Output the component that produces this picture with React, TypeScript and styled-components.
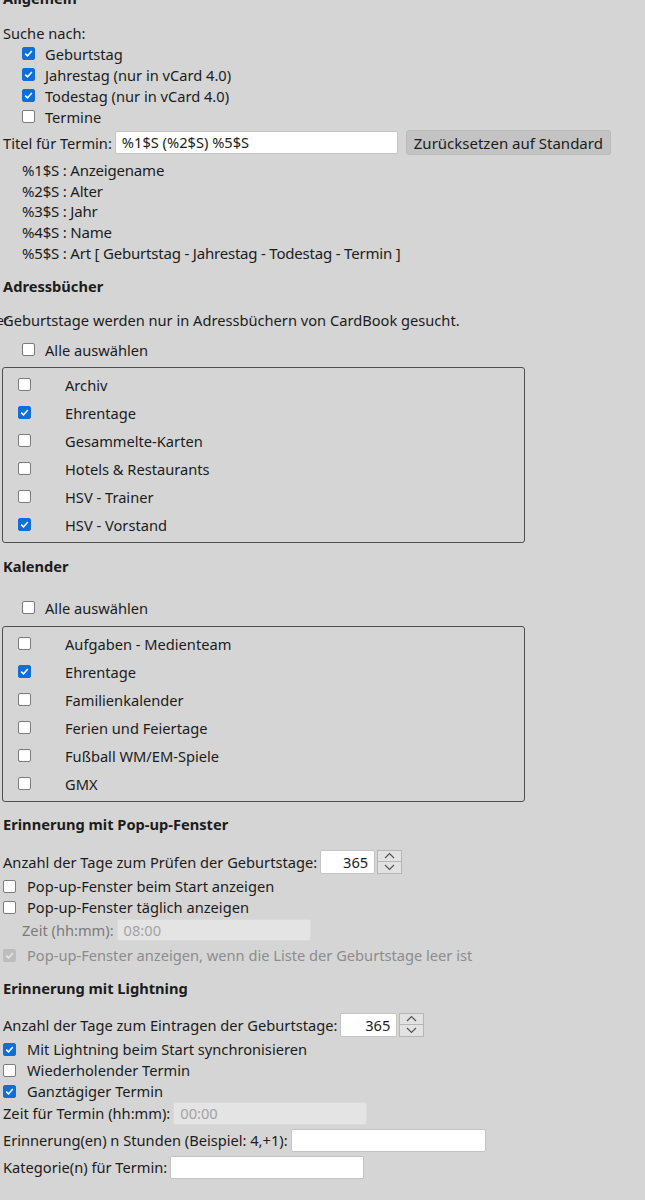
import React from 'react';
import styled, {createGlobalStyle} from 'styled-components';

const GlobalStyle = createGlobalStyle`
	body {
		margin: 0;
		background: #d5d5d5;
		font-family: "Noto Sans", "Open Sans", sans-serif;
		font-size: 14.65px;
		color: #1c1c1c;
	}
`;

const Page = styled.div`
	padding-left: 3px;
	margin-top: -12px;
	overflow: hidden;
`;

const Heading = styled.div<{ gap?: number }>`
	font-weight: bold;
	line-height: 20px;
	margin-top: ${p => p.gap ?? 0}px;
`;

const Line = styled.div<{ gap?: number }>`
	line-height: 20px;
	margin-top: ${p => p.gap ?? 0}px;
	position: relative;
`;

// half-hidden label peeking out under the description line
const Stray = styled.span`
	position: absolute;
	left: -6px;
	top: 5px;
	font-size: 12px;
	line-height: 12px;
`;

const CheckRow = styled.label<{ indent: number; labelAt: number; height?: number; disabled?: boolean; gap?: number }>`
	display: flex;
	align-items: center;
	height: ${p => p.height ?? 21}px;
	margin-top: ${p => p.gap ?? 0}px;
	padding-left: ${p => p.indent}px;
	white-space: nowrap;
	color: ${p => p.disabled ? '#8c8c8c' : 'inherit'};
	> span {
		margin-left: ${p => p.labelAt - p.indent - 13}px;
	}
`;

const Box = styled.div<{ checked?: boolean; disabled?: boolean }>`
	width: 13px;
	height: 13px;
	box-sizing: border-box;
	border-radius: 2px;
	flex-shrink: 0;
	display: flex;
	align-items: center;
	justify-content: center;
	background: ${p => p.disabled ? '#bdbdbd' : p.checked ? '#0f6fd4' : '#ffffff'};
	border: 1px solid ${p => p.disabled ? '#bdbdbd' : p.checked ? '#0f6fd4' : '#7c7c7c'};
`;

const Checkbox = ({checked, disabled}: { checked?: boolean; disabled?: boolean }) => (
	<Box checked={checked} disabled={disabled}>
		{checked && (
			<svg width="9" height="9" viewBox="0 0 9 9">
				<path d="M1.2 4.6 L3.5 6.9 L7.8 1.9" fill="none" stroke={disabled ? '#e6e6e6' : '#fff'} strokeWidth="1.6"/>
			</svg>
		)}
	</Box>
);

const Row = styled.div<{ gap?: number }>`
	display: flex;
	align-items: center;
	margin-top: ${p => p.gap ?? 0}px;
	white-space: nowrap;
`;

const Field = styled.div<{ width: number; height?: number; disabled?: boolean; right?: boolean }>`
	box-sizing: border-box;
	width: ${p => p.width}px;
	height: ${p => p.height ?? 23}px;
	line-height: ${p => (p.height ?? 23) - 2}px;
	padding: 0 6px;
	background: ${p => p.disabled ? '#e4e4e4' : '#ffffff'};
	border: 1px solid ${p => p.disabled ? '#dadada' : '#c4c4c4'};
	border-radius: 2px;
	color: ${p => p.disabled ? '#a3a3a3' : 'inherit'};
	text-align: ${p => p.right ? 'right' : 'left'};
`;

const ResetButton = styled.div`
	margin-left: 8px;
	height: 25px;
	line-height: 24px;
	background: #c3c3c3;
	border: 1px solid #bbbbbb;
	border-radius: 3px;
	box-sizing: border-box;
	width: 205px;
	text-align: center;
	font-size: 15px;
`;

const Legend = styled.div`
	padding-left: 19px;
	margin-top: 5px;
	font-size: 15px;
	letter-spacing: -0.2px;
	> div {
		line-height: 20.7px;
		white-space: nowrap;
	}
`;

const ListBox = styled.div<{ gap: number }>`
	width: 523px;
	margin-top: ${p => p.gap}px;
	margin-left: -1px;
	box-sizing: border-box;
	padding: 3px 0;
	border: 1px solid #4f4f4f;
	border-radius: 3px;
`;

const Spin = styled.div`
	margin-left: 2px;
	width: 25px;
	height: 24px;
	box-sizing: border-box;
	border: 1px solid #b6b6b6;
	background: #e2e2e2;
	display: flex;
	flex-direction: column;
	> div {
		flex: 1;
		display: flex;
		align-items: center;
		justify-content: center;
	}
	> div + div {
		border-top: 1px solid #b6b6b6;
	}
`;

const Spinner = () => (
	<Spin>
		<div>
			<svg width="11" height="7" viewBox="0 0 11 7">
				<path d="M1 6 L5.5 1.5 L10 6" fill="none" stroke="#555" strokeWidth="1.2"/>
			</svg>
		</div>
		<div>
			<svg width="11" height="7" viewBox="0 0 11 7">
				<path d="M1 1 L5.5 5.5 L10 1" fill="none" stroke="#555" strokeWidth="1.2"/>
			</svg>
		</div>
	</Spin>
);

const Label = styled.span<{ disabled?: boolean }>`
	margin-right: 3px;
	color: ${p => p.disabled ? '#7a7a7a' : 'inherit'};
`;

const books: [string, boolean][] = [
	['Archiv', false],
	['Ehrentage', true],
	['Gesammelte-Karten', false],
	['Hotels & Restaurants', false],
	['HSV - Trainer', false],
	['HSV - Vorstand', true],
];

const calendars: [string, boolean][] = [
	['Aufgaben - Medienteam', false],
	['Ehrentage', true],
	['Familienkalender', false],
	['Ferien und Feiertage', false],
	['Fußball WM/EM-Spiele', false],
	['GMX', false],
];

const legend = [
	'%1$S : Anzeigename',
	'%2$S : Alter',
	'%3$S : Jahr',
	'%4$S : Name',
	'%5$S : Art [ Geburtstag - Jahrestag - Todestag - Termin ]',
];

const App = () => {
	return (
		<>
			<GlobalStyle/>
			<Page>
				<Heading>Allgemein</Heading>
				<Line gap={15}>Suche nach:</Line>
				<CheckRow indent={19} labelAt={42}><Checkbox checked/><span>Geburtstag</span></CheckRow>
				<CheckRow indent={19} labelAt={42}><Checkbox checked/><span>Jahrestag (nur in vCard 4.0)</span></CheckRow>
				<CheckRow indent={19} labelAt={42}><Checkbox checked/><span>Todestag (nur in vCard 4.0)</span></CheckRow>
				<CheckRow indent={19} labelAt={42}><Checkbox/><span>Termine</span></CheckRow>
				<Row gap={3}>
					<Label>Titel für Termin:</Label>
					<Field width={283}>%1$S (%2$S) %5$S</Field>
					<ResetButton>Zurücksetzen auf Standard</ResetButton>
				</Row>
				<Legend>
					{legend.map(l => <div key={l}>{l}</div>)}
				</Legend>

				<Heading gap={12}>Adressbücher</Heading>
				<Line gap={14}><Stray>er</Stray>Geburtstage werden nur in Adressbüchern von CardBook gesucht.</Line>
				<CheckRow indent={19} labelAt={42} height={20} gap={10}><Checkbox/><span>Alle auswählen</span></CheckRow>
				<ListBox gap={7}>
					{books.map(([name, on]) => (
						<CheckRow key={name} indent={15} labelAt={62} height={28}><Checkbox checked={on}/><span>{name}</span></CheckRow>
					))}
				</ListBox>

				<Heading gap={13}>Kalender</Heading>
				<CheckRow indent={19} labelAt={42} height={20} gap={22}><Checkbox/><span>Alle auswählen</span></CheckRow>
				<ListBox gap={8}>
					{calendars.map(([name, on]) => (
						<CheckRow key={name} indent={15} labelAt={62} height={28}><Checkbox checked={on}/><span>{name}</span></CheckRow>
					))}
				</ListBox>

				<Heading gap={12}>Erinnerung mit Pop-up-Fenster</Heading>
				<Row gap={16}>
					<Label>Anzahl der Tage zum Prüfen der Geburtstage:</Label>
					<Field width={55} height={24} right>365</Field>
					<Spinner/>
				</Row>
				<CheckRow indent={0} labelAt={24} gap={2}><Checkbox/><span>Pop-up-Fenster beim Start anzeigen</span></CheckRow>
				<CheckRow indent={0} labelAt={24}><Checkbox/><span>Pop-up-Fenster täglich anzeigen</span></CheckRow>
				<Row gap={1} style={{paddingLeft: 19}}>
					<Label disabled>Zeit (hh:mm):</Label>
					<Field width={194} height={22} disabled>08:00</Field>
				</Row>
				<CheckRow indent={0} labelAt={24} disabled gap={4}><Checkbox checked disabled/><span>Pop-up-Fenster anzeigen, wenn die Liste der Geburtstage leer ist</span></CheckRow>

				<Heading gap={12}>Erinnerung mit Lightning</Heading>
				<Row gap={15}>
					<Label>Anzahl der Tage zum Eintragen der Geburtstage:</Label>
					<Field width={57} height={24} right>365</Field>
					<Spinner/>
				</Row>
				<CheckRow indent={0} labelAt={24} gap={2}><Checkbox checked/><span>Mit Lightning beim Start synchronisieren</span></CheckRow>
				<CheckRow indent={0} labelAt={24}><Checkbox/><span>Wiederholender Termin</span></CheckRow>
				<CheckRow indent={0} labelAt={24}><Checkbox checked/><span>Ganztägiger Termin</span></CheckRow>
				<Row>
					<Label>Zeit für Termin (hh:mm):</Label>
					<Field width={194} disabled>00:00</Field>
				</Row>
				<Row gap={4}>
					<Label>Erinnerung(en) n Stunden (Beispiel: 4,+1):</Label>
					<Field width={195}/>
				</Row>
				<Row gap={4}>
					<Label>Kategorie(n) für Termin:</Label>
					<Field width={194}/>
				</Row>
			</Page>
		</>
	);
};

export default App;
